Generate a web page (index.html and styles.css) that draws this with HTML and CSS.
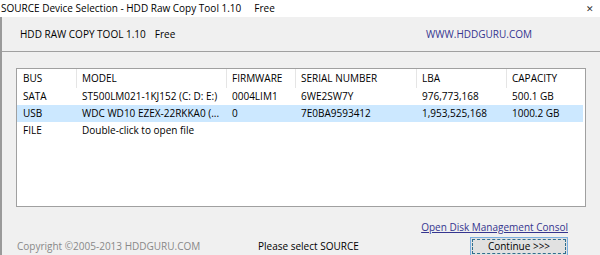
FILE: index.html
```html
<!DOCTYPE html>
<html>
<head>
<meta charset="utf-8">
<title>SOURCE Device Selection</title>
<link rel="stylesheet" href="styles.css">
</head>
<body>
	<div class='window'>
		<div class='title-bar'>
			<span class='title'>SOURCE Device Selection - HDD Raw Copy Tool 1.10<span class='free'>Free</span></span>
			<span class='close'>&#x2715;</span>
		</div>
		<div class='header'>
			<span class='app-name'>HDD RAW COPY TOOL 1.10<span class='free small'>Free</span></span>
			<span class='site'>WWW.HDDGURU.COM</span>
		</div>
		<div class='content'>
			<div class='list'>
				<div class='row head'>
					<div class='c bus'>BUS</div>
					<div class='c model'>MODEL</div>
					<div class='c fw'>FIRMWARE</div>
					<div class='c serial'>SERIAL NUMBER</div>
					<div class='c lba'>LBA</div>
					<div class='c cap'>CAPACITY</div>
				</div>
				<div class='row'>
					<div class='c bus'>SATA</div>
					<div class='c model'>ST500LM021-1KJ152 (C: D: E:)</div>
					<div class='c fw'>0004LIM1</div>
					<div class='c serial'>6WE2SW7Y</div>
					<div class='c lba'>976,773,168</div>
					<div class='c cap'>500.1 GB</div>
				</div>
				<div class='row selected'>
					<div class='c bus'>USB</div>
					<div class='c model'>WDC WD10 EZEX-22RKKA0 (...</div>
					<div class='c fw'>0</div>
					<div class='c serial'>7E0BA9593412</div>
					<div class='c lba'>1,953,525,168</div>
					<div class='c cap'>1000.2 GB</div>
				</div>
				<div class='row'>
					<div class='c bus'>FILE</div>
					<div class='c model wide'>Double-click to open file</div>
				</div>
			</div>
			<div class='link-row'>
				<a class='link'>Open Disk Management Consol</a>
			</div>
			<div class='footer'>
				<span class='copyright'>Copyright &copy;2005-2013 HDDGURU.COM</span>
				<span class='status'>Please select SOURCE</span>
				<button class='continue' type='button'>Continue &gt;&gt;&gt;</button>
			</div>
		</div>
	</div>
</body>
</html>
```
FILE: styles.css
```css
* {
	box-sizing: border-box;
}

html, body {
	margin: 0;
	padding: 0;
	height: 100%;
	overflow: hidden;
}

body {
	font-family: 'Open Sans', 'Noto Sans', sans-serif;
	font-size: 10px;
	color: #000;
	background: #f0f0f0;
}

.window {
	height: 255px;
	display: flex;
	flex-direction: column;
	border-left: 2px solid #9a9a9a;
}

.title-bar {
	height: 17px;
	background: #fff;
	display: flex;
	align-items: center;
	justify-content: space-between;
	padding: 0 6px 0 1px;
	margin-left: -2px;
	line-height: 17px;
}

.free {
	margin-left: 13px;
}

.free.small {
	margin-left: 9px;
}

.close {
	font-size: 9px;
	color: #333;
}

.header {
	height: 36px;
	display: flex;
	align-items: center;
	justify-content: space-between;
	padding: 0 68px 0 18px;
	border-bottom: 1px solid #a0a0a0;
	background: #f0f0f0;
}

.site {
	color: #35358f;
}

.content {
	flex: 1;
	display: flex;
	flex-direction: column;
	padding: 16px 14px 0 14px;
}

.list {
	height: 139px;
	background: #fff;
	border: 1px solid #a0a0a0;
	padding: 0 2px 0 0;
}

.row {
	display: flex;
	height: 17px;
	line-height: 17px;
}

.row.head {
	height: 19px;
	line-height: 19px;
}

.row.selected {
	background: #cce8ff;
}

.c {
	padding-left: 5px;
	white-space: nowrap;
	overflow: hidden;
}

.bus {
	padding-left: 6px;
}

.head .c {
	border-right: 1px solid #e5e5e5;
}

.head .cap {
	border-right: none;
}

.bus { width: 60px; }
.model { width: 150px; }
.fw { width: 69px; }
.serial { width: 121px; }
.lba { width: 90px; }
.cap { width: 76px; }
.wide { width: 300px; }

.link-row {
	display: flex;
	justify-content: flex-end;
	padding-right: 18px;
	margin-top: 13px;
	height: 14px;
	line-height: 14px;
}

.link {
	color: #35358f;
	text-decoration: underline;
}

.footer {
	display: flex;
	align-items: center;
	margin-top: 3px;
	height: 18px;
}

.copyright {
	color: #888;
	width: 242px;
	padding-left: 1px;
}

.status {
	flex: 1;
}

.continue {
	font-family: inherit;
	font-size: 10px;
	width: 98px;
	height: 19px;
	margin-right: 18px;
	padding: 0;
	color: #000;
	background: #e1e1e1;
	border: 1px solid #7aaee0;
	outline: 1px dashed #2f6f8f;
	outline-offset: -3px;
}
```
